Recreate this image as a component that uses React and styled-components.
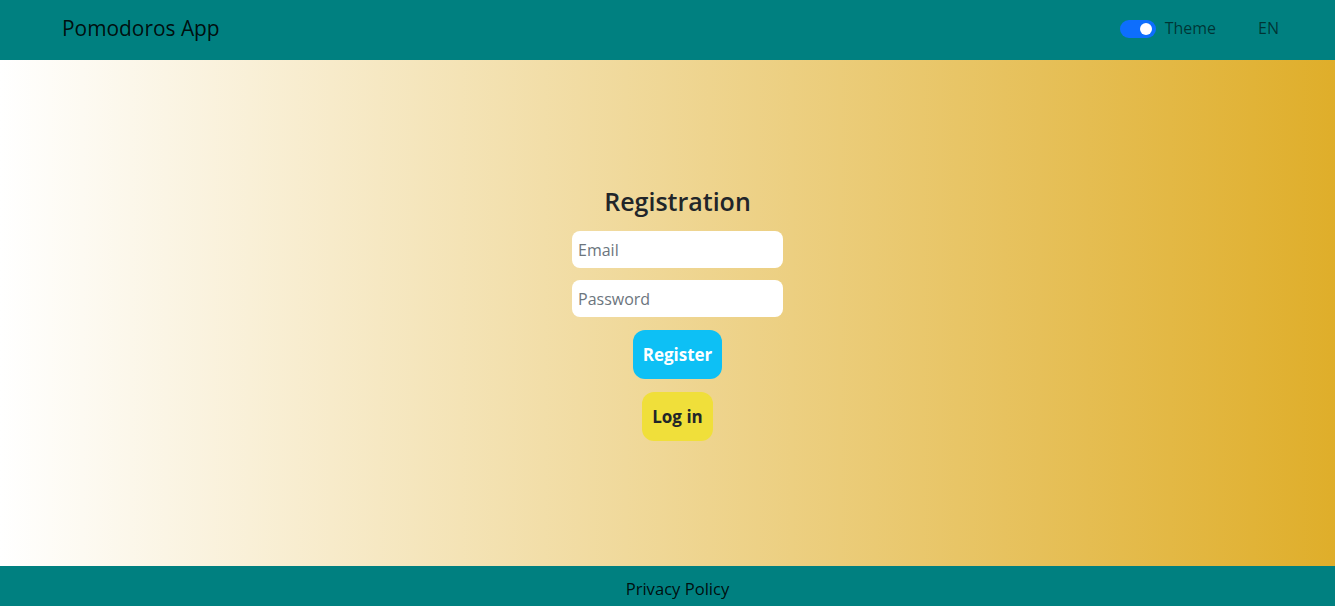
import React from "react";
import styled, { createGlobalStyle } from "styled-components";

const Global = createGlobalStyle`
  html, body { margin: 0; padding: 0; height: 100%; }
  body { font-family: "Open Sans", "Noto Sans", sans-serif; color: #212529; }
  #root { min-height: 100vh; display: flex; flex-direction: column; }
  * { box-sizing: border-box; }
`;

const Page = styled.div`
  display: flex;
  flex-direction: column;
  height: 606px;
`;

const Navbar = styled.nav`
  height: 60px;
  flex: 0 0 60px;
  background: #008080;
  display: flex;
  align-items: center;
  justify-content: space-between;
  padding: 0 56px 4px 62px;
`;

const Brand = styled.span`
  font-size: 20.9px;
  color: rgba(0, 0, 0, 0.9);
`;

const NavRight = styled.div`
  display: flex;
  align-items: center;
  gap: 42px;
`;

const SwitchWrap = styled.label`
  display: flex;
  align-items: center;
  gap: 9px;
  font-size: 16px;
  color: rgba(0, 0, 0, 0.6);
`;

const Track = styled.span`
  position: relative;
  width: 36px;
  height: 18px;
  border-radius: 9px;
  background: #0d6efd;
  display: inline-block;
  margin-top: 2px;
`;

const Knob = styled.span`
  position: absolute;
  right: 4px;
  top: 3px;
  width: 12px;
  height: 12px;
  border-radius: 50%;
  background: #fff;
`;

const NavLink = styled.span`
  font-size: 16px;
  color: rgba(0, 0, 0, 0.6);
`;

const Main = styled.main`
  flex: 1;
  background: linear-gradient(to right, #ffffff, #dfae2a);
  display: flex;
  align-items: center;
  justify-content: center;
  padding: 0 0 0 20px;
`;

const Form = styled.form`
  display: flex;
  flex-direction: column;
  align-items: center;
  width: 211px;
`;

const Title = styled.h2`
  margin: 0 0 15px;
  font-size: 25px;
  font-weight: 600;
  line-height: 1.2;
  color: #212529;
`;

const Input = styled.input`
  width: 211px;
  height: 37px;
  border: none;
  border-radius: 8px;
  background: #fff;
  padding: 2px 6px 0;
  font-family: inherit;
  font-size: 16px;
  margin-bottom: ${(p) => p.$mb || 0}px;
  &::placeholder { color: #6c757d; }
  outline: none;
`;

const Button = styled.button`
  height: 49px;
  padding: 0 10px;
  border: none;
  border-radius: 12px;
  font-family: inherit;
  font-size: 17px;
  font-weight: 700;
  background: ${(p) => p.$bg};
  color: ${(p) => p.$color};
  margin-top: ${(p) => p.$mt}px;
  cursor: pointer;
`;

const Footer = styled.footer`
  height: 40px;
  flex: 0 0 40px;
  background: #008080;
  display: flex;
  align-items: center;
  justify-content: center;
  padding: 4px 0 0 20px;
  font-size: 16.6px;
  color: rgba(0, 0, 0, 0.9);
`;

export default function App() {
  return (
    <>
      <Global />
      <Page>
        <Navbar>
          <Brand>Pomodoros App</Brand>
          <NavRight>
            <SwitchWrap>
              <Track>
                <Knob />
              </Track>
              Theme
            </SwitchWrap>
            <NavLink>EN</NavLink>
          </NavRight>
        </Navbar>
        <Main>
          <Form onSubmit={(e) => e.preventDefault()}>
            <Title>Registration</Title>
            <Input type="email" placeholder="Email" $mb={12} />
            <Input type="password" placeholder="Password" />
            <Button type="button" $bg="#0dc0f5" $color="#fff" $mt={13}>
              Register
            </Button>
            <Button type="button" $bg="#f0df3a" $color="#212529" $mt={13}>
              Log in
            </Button>
          </Form>
        </Main>
        <Footer>Privacy Policy</Footer>
      </Page>
    </>
  );
}
